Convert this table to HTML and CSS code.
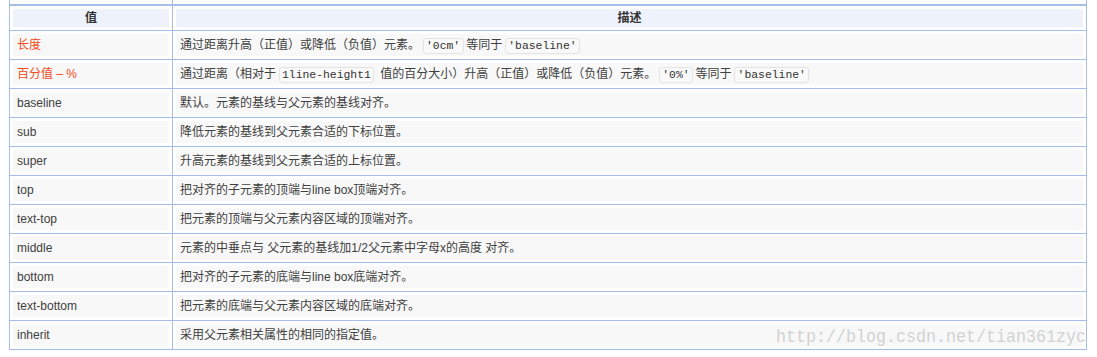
FILE: index.html
```html
<!DOCTYPE html>
<html lang="zh">
<head>
<meta charset="utf-8">
<title>vertical-align</title>
<link rel="stylesheet" href="styles.css">
</head>
<body>
<div class="page">
  <table class="vt">
    <colgroup><col class="c1"><col class="c2"></colgroup>
    <tbody>
      <tr class="stub"><td></td><td></td></tr>
      <tr class="head">
        <th><div class="box">值</div></th>
        <th><div class="box">描述</div></th>
      </tr>
      <tr><td><div class="box red">长度</div></td><td><div class="box">通过距离升高（正值）或降低（负值）元素。<code>'0cm'</code>等同于<code>'baseline'</code></div></td></tr>
      <tr><td><div class="box red">百分值 – %</div></td><td><div class="box">通过距离（相对于<code>1line-height1</code> 值的百分大小）升高（正值）或降低（负值）元素。<code>'0%'</code>等同于<code>'baseline'</code></div></td></tr>
      <tr><td><div class="box">baseline</div></td><td><div class="box">默认。元素的基线与父元素的基线对齐。</div></td></tr>
      <tr><td><div class="box">sub</div></td><td><div class="box">降低元素的基线到父元素合适的下标位置。</div></td></tr>
      <tr><td><div class="box">super</div></td><td><div class="box">升高元素的基线到父元素合适的上标位置。</div></td></tr>
      <tr><td><div class="box">top</div></td><td><div class="box">把对齐的子元素的顶端与line box顶端对齐。</div></td></tr>
      <tr><td><div class="box">text-top</div></td><td><div class="box">把元素的顶端与父元素内容区域的顶端对齐。</div></td></tr>
      <tr><td><div class="box">middle</div></td><td><div class="box">元素的中垂点与 父元素的基线加1/2父元素中字母x的高度 对齐。</div></td></tr>
      <tr><td><div class="box">bottom</div></td><td><div class="box">把对齐的子元素的底端与line box底端对齐。</div></td></tr>
      <tr><td><div class="box">text-bottom</div></td><td><div class="box">把元素的底端与父元素内容区域的底端对齐。</div></td></tr>
      <tr class="last"><td><div class="box">inherit</div></td><td><div class="box">采用父元素相关属性的相同的指定值。</div></td></tr>
    </tbody>
  </table>
  <div class="watermark">http://blog.csdn.net/tian361zyc</div>
</div>
</body>
</html>
```
FILE: styles.css
```css
html, body {
  margin: 0;
  padding: 0;
  background: #ffffff;
}

.page {
  position: relative;
  padding-left: 9px;
  font-family: "Liberation Sans", "Noto Sans CJK SC", sans-serif;
  font-size: 12px;
  color: #404040;
}

.vt {
  border-collapse: separate;
  border-spacing: 0;
  table-layout: fixed;
  width: 1078px;
}

.vt .c1 {
  width: 163px;
}

.vt td,
.vt th {
  border-left: 1px solid #a6bde8;
  border-top: 1px solid #a6bde8;
  padding: 3px;
  vertical-align: top;
  text-align: left;
}

.vt tr > :last-child {
  border-right: 1px solid #a6bde8;
}

.vt .stub td {
  border-top: none;
  padding: 0;
  height: 4px;
}

.vt .head th {
  border-top: 2px solid #a6bde8;
}

.vt .last td {
  border-bottom: 1px solid #a6bde8;
}

.box {
  background: #f8f8f8;
  height: 22px;
  line-height: 22px;
  padding: 0 4px;
  white-space: nowrap;
}

.head .box {
  background: #eef2fb;
  height: 18px;
  line-height: 18px;
  text-align: center;
  font-weight: bold;
  color: #333333;
}

.red {
  color: #f24a1d;
}

code {
  font-family: "Liberation Mono", monospace;
  font-size: 11.4px;
  line-height: 13px;
  padding: 1px 2.5px;
  margin: 0 2.5px;
  background: #f9f9f9;
  border: 1px solid #e4e4e4;
  border-radius: 3px;
  color: #333333;
}

.watermark {
  position: absolute;
  left: 776px;
  top: 328px;
  font-family: "Liberation Mono", monospace;
  font-size: 19px;
  line-height: 19px;
  color: #d2d2d2;
  white-space: nowrap;
  transform: scaleX(0.877);
  transform-origin: left top;
}
```
